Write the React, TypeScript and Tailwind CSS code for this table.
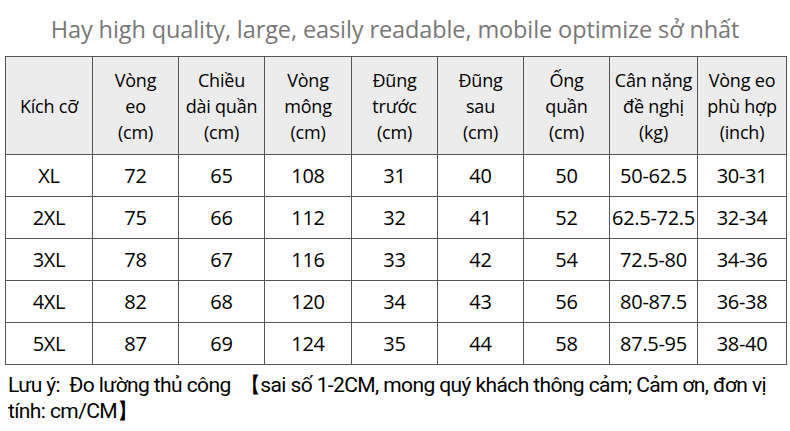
const headers = [
  ['Kích cỡ'],
  ['Vòng', 'eo', '(cm)'],
  ['Chiều', 'dài quần', '(cm)'],
  ['Vòng', 'mông', '(cm)'],
  ['Đũng', 'trước', '(cm)'],
  ['Đũng', 'sau', '(cm)'],
  ['Ống', 'quần', '(cm)'],
  ['Cân nặng', 'đề nghị', '(kg)'],
  ['Vòng eo', 'phù hợp', '(inch)'],
];

const rows = [
  ['XL', '72', '65', '108', '31', '40', '50', '50-62.5', '30-31'],
  ['2XL', '75', '66', '112', '32', '41', '52', '62.5-72.5', '32-34'],
  ['3XL', '78', '67', '116', '33', '42', '54', '72.5-80', '34-36'],
  ['4XL', '82', '68', '120', '34', '43', '56', '80-87.5', '36-38'],
  ['5XL', '87', '69', '124', '35', '44', '58', '87.5-95', '38-40'],
];

const widths = ['w-[87px]', 'w-[86px]', 'w-[86px]', 'w-[87px]', 'w-[86px]', 'w-[86px]', 'w-[86px]', 'w-[88px]', 'w-[89px]'];

export default function App() {
  return (
    <div className="w-[790px] h-[431px] bg-white overflow-hidden font-['Open_Sans','Noto_Sans',sans-serif]">
      {/* Title */}
      <h1 className="pt-[13px] h-[56px] text-center text-[23.5px] leading-[32px] font-medium tracking-[-0.1px] text-[#777]">
        Hay high quality, large, easily readable, mobile optimize sở nhất
      </h1>

      {/* Size table */}
      <table className="ml-[5px] w-[781px] table-fixed border-collapse text-black">
        <thead>
          <tr className="bg-[#ececec] h-[98px]">
            {headers.map((lines, i) => (
              <th
                key={i}
                className={`${widths[i]} border border-[#555] px-0 text-center align-middle font-medium text-[18px] leading-[26px] whitespace-nowrap tracking-[-0.2px]`}
              >
                {lines.map((l, j) => (
                  <div key={j}>{l}</div>
                ))}
              </th>
            ))}
          </tr>
        </thead>
        <tbody>
          {rows.map((row) => (
            <tr key={row[0]} className="h-[42px]">
              {row.map((cell, i) => (
                <td
                  key={i}
                  className="border border-[#555] p-0 text-center font-medium text-[20px] leading-[26px] whitespace-nowrap tracking-[-0.3px]"
                >
                  {cell}
                </td>
              ))}
            </tr>
          ))}
        </tbody>
      </table>

      {/* Note */}
      <p className="mt-[7px] ml-[8px] text-[21px] leading-[26px] text-black tracking-[-0.6px] font-['Liberation_Sans_Narrow','Roboto',sans-serif]">
        Lưu ý:&nbsp; Đo lường thủ công &nbsp;【sai số 1-2CM, mong quý khách thông cảm; Cảm ơn, đơn vị
        <br />
        tính: cm/CM】
      </p>
    </div>
  );
}
